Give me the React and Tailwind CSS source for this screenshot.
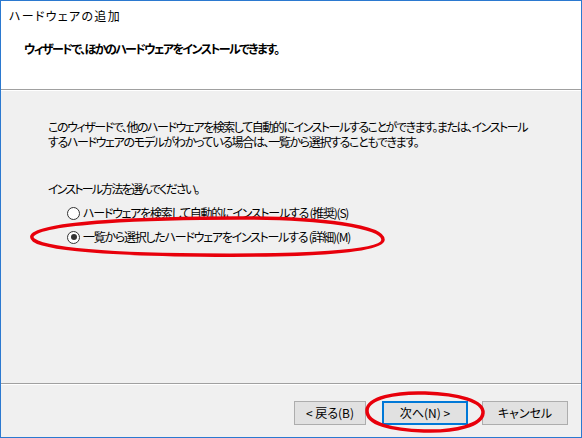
import React from 'react'

const font = "font-['Noto_Sans_CJK_JP','Noto_Sans',sans-serif] [font-feature-settings:'palt']"

function Radio({ checked, label }) {
  return (
    <div className="flex items-center h-[16px] ml-[19px]">
      <span className="w-[13px] h-[13px] rounded-full border border-[#333] bg-white flex items-center justify-center">
        {checked && <span className="w-[6px] h-[6px] rounded-full bg-[#333]" />}
      </span>
      <span className="ml-[3px] text-[12px] leading-[16px] tracking-[-1.25px] whitespace-nowrap">{label}</span>
    </div>
  )
}

function Button({ children, primary, className }) {
  return (
    <button
      className={
        'h-[24px] text-[12px] leading-[16px] bg-[#e1e1e1] text-black ' +
        (primary ? 'border-2 border-[#0078d7] ' : 'border border-[#adadad] ') +
        className
      }
    >
      {children}
    </button>
  )
}

export default function App() {
  return (
    <div className={`relative w-[582px] h-[438px] border border-[#2b79d0] bg-[#f0f0f0] flex flex-col text-black ${font}`}>
      <div className="h-[88px] bg-white pl-[8px] pt-[7px]">
        <div className="text-[12px] leading-[16px] tracking-[1.3px]">ハードウェアの追加</div>
        <div className="mt-[17px] ml-[15px] text-[12px] leading-[16px] font-bold tracking-[-1.6px]">
          ウィザードで、ほかのハードウェアをインストールできます。
        </div>
      </div>
      <div className="border-t border-[#a0a0a0]" />
      <div className="border-t border-white" />

      <div className="flex-1 pl-[47px] pt-[28px]">
        <p className="text-[12px] leading-[15px] whitespace-nowrap">
          <span className="tracking-[-1.45px]">
            このウィザードで、他のハードウェアを検索して自動的にインストールすることができます。または、インストール
          </span>
          <br />
          <span className="tracking-[-1.35px]">
            するハードウェアのモデルがわかっている場合は、一覧から選択することもできます。
          </span>
        </p>
        <div className="mt-[32px] text-[12px] leading-[16px] tracking-[-1.8px]">インストール方法を選んでください。</div>
        <div className="mt-[8px] flex flex-col gap-[8px]">
          <Radio label="ハードウェアを検索して自動的にインストールする (推奨)(S)" />
          <Radio checked label="一覧から選択したハードウェアをインストールする (詳細)(M)" />
        </div>
      </div>

      <div className="border-t border-[#a0a0a0]" />
      <div className="border-t border-white" />
      <div className="h-[52px] flex items-start justify-end pr-[13px] pt-[16px]">
        <Button className="w-[72px]">&lt; 戻る(B)</Button>
        <Button primary className="w-[86px] ml-[16px]">次へ(N) &gt;</Button>
        <Button className="w-[86px] ml-[14px]">キャンセル</Button>
      </div>

      <svg className="absolute left-[-1px] top-[-1px] pointer-events-none" width="582" height="438" viewBox="0 0 582 438">
        <path
          d="M32 236 C 40 222, 150 218, 240 218 C 320 218, 384 226, 383 240 C 382 252, 300 256, 200 255 C 100 254, 28 248, 32 236 Z"
          fill="none"
          stroke="#e8000b"
          strokeWidth="3.5"
        />
        <path
          d="M367 410 C 368 398, 395 392, 425 393 C 458 394, 484 401, 483 413 C 482 425, 456 432, 424 431 C 392 430, 366 424, 367 410 Z"
          fill="none"
          stroke="#e8000b"
          strokeWidth="3.5"
        />
      </svg>
    </div>
  )
}
